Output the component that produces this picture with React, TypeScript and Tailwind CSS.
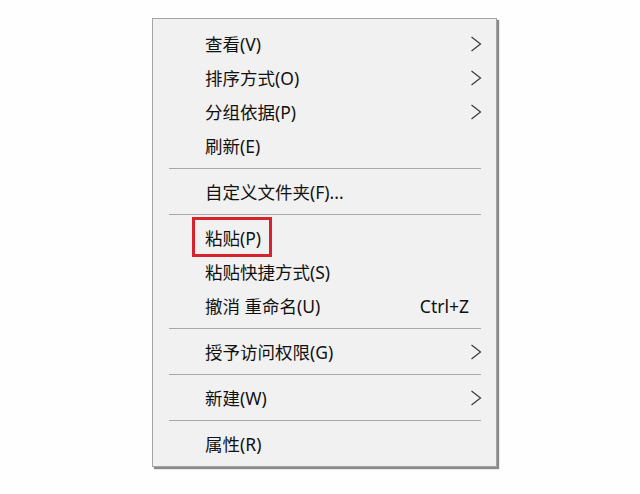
type Item = {
  label: string
  sub?: boolean
  shortcut?: string
  boxed?: boolean
}

const groups: Item[][] = [
  [
    { label: '查看(V)', sub: true },
    { label: '排序方式(O)', sub: true },
    { label: '分组依据(P)', sub: true },
    { label: '刷新(E)' },
  ],
  [{ label: '自定义文件夹(F)...' }],
  [
    { label: '粘贴(P)', boxed: true },
    { label: '粘贴快捷方式(S)' },
    { label: '撤消 重命名(U)', shortcut: 'Ctrl+Z' },
  ],
  [{ label: '授予访问权限(G)', sub: true }],
  [{ label: '新建(W)', sub: true }],
  [{ label: '属性(R)' }],
]

function Chevron() {
  return (
    <svg width="12" height="16" viewBox="0 0 12 16" className="text-[#3a3a3a]">
      <path d="M1.5 1 L10.5 8 L1.5 15" fill="none" stroke="currentColor" strokeWidth="1.2" />
    </svg>
  )
}

function Row({ item }: { item: Item }) {
  return (
    <div className="relative flex h-[34px] items-center pl-[52px] pr-[14px]">
      {item.boxed && (
        <div className="absolute left-[39px] top-[-4px] h-[40px] w-[80px] border-[3px] border-[#d8232c]" />
      )}
      <span className="flex-1 text-[#111]">{item.label}</span>
      {item.shortcut && <span className="pr-[13px] text-[#111]">{item.shortcut}</span>}
      {item.sub && <Chevron />}
    </div>
  )
}

export default function App() {
  return (
    <div
      className="h-[494px] w-[640px] bg-[#fefefe] pt-[18px] pl-[152px]"
      style={{ fontFamily: "'Noto Sans', 'Noto Sans CJK SC', sans-serif" }}
    >
      <div className="w-[345px] border border-[#a4a4a4] bg-[#f1f1f1] pt-[8px] pb-[5px] text-[17.5px] shadow-[2px_2px_1px_#8a8a8a]">
        {groups.map((group, gi) => (
          <div key={gi}>
            {gi > 0 && (
              <div className="pt-[5px] pb-[6px] pl-[16px] pr-[15px]">
                <div className="h-px bg-[#a8a8a8]" />
              </div>
            )}
            {group.map((item) => (
              <Row key={item.label} item={item} />
            ))}
          </div>
        ))}
      </div>
    </div>
  )
}
